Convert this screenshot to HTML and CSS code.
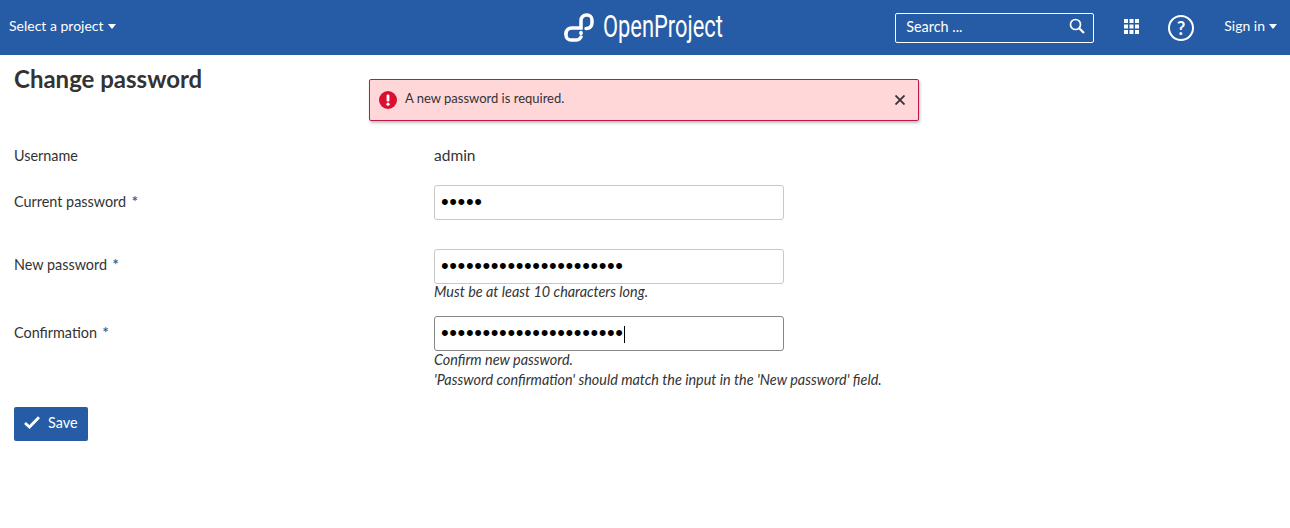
FILE: index.html

```html
<!DOCTYPE html>
<html lang="en">
<head>
    <meta charset="UTF-8">
    <title>Change password | OpenProject</title>
    <link rel="stylesheet" href="styles.css">
</head>
<body>
    <header class="topBar">
        <div class="topLeft">
            <a class="topLink">Select a project<span class="caret"></span></a>
        </div>
        <div class="logo">
            <svg class="logoMark" width="30" height="29" viewBox="0 0 30 29" fill="none" stroke="#fff" stroke-width="3.500" stroke-linecap="round">
                <path d="M2 20.500A5.500 5.500 0 0 1 7.500 15H17V7.500A5.500 5.500 0 0 1 22.500 2H23A5 5 0 0 1 28 7V10A5.500 5.500 0 0 1 22.500 15.500H22" />
                <path d="M2 20.500V22A5 5 0 0 0 7 27H11A6 6 0 0 0 17 24" />
                <path d="M17 19.500V20.500" />
            </svg>
            <span class="logoText">OpenProject</span>
        </div>
        <div class="topRight">
            <div class="searchBox">
                <span>Search ...</span>
                <svg width="16" height="16" viewBox="0 0 16 16" fill="none" stroke="#fff" stroke-width="1.700">
                    <circle cx="6.500" cy="6.500" r="5" />
                    <path d="M10.200 10.200L15 15" stroke-width="2.200" />
                </svg>
            </div>
            <svg class="gridIcon" width="15" height="15" viewBox="0 0 15 15" fill="#fff">
                <rect x="0" y="0" width="4" height="4" /><rect x="5.500" y="0" width="4" height="4" /><rect x="11" y="0" width="4" height="4" />
                <rect x="0" y="5.500" width="4" height="4" /><rect x="5.500" y="5.500" width="4" height="4" /><rect x="11" y="5.500" width="4" height="4" />
                <rect x="0" y="11" width="4" height="4" /><rect x="5.500" y="11" width="4" height="4" /><rect x="11" y="11" width="4" height="4" />
            </svg>
            <div class="helpIcon">?</div>
            <a class="topLink signIn">Sign in<span class="caret"></span></a>
        </div>
    </header>

    <div class="flash">
        <svg class="flashIcon" width="18" height="18" viewBox="0 0 18 18">
            <circle cx="9" cy="9" r="9" fill="#d9102f" />
            <rect x="7.600" y="3.500" width="2.800" height="7" rx="1.200" fill="#fff" />
            <circle cx="9" cy="13.200" r="1.600" fill="#fff" />
        </svg>
        <span class="flashText">A new password is required.</span>
        <svg class="flashClose" width="10" height="10" viewBox="0 0 10 10" stroke="#333" stroke-width="1.800">
            <path d="M0.500 0.500L9.500 9.500M9.500 0.500L0.500 9.500" />
        </svg>
    </div>

    <main class="content">
        <h2 class="pageTitle">Change password</h2>
        <form class="form">
            <div class="formLine lineUser">
                <label>Username</label>
                <div class="field">admin</div>
            </div>
            <div class="formLine lineCurrent">
                <label>Current password<span class="req">*</span></label>
                <div class="field">
                    <div class="input">&#8226;&#8226;&#8226;&#8226;&#8226;</div>
                </div>
            </div>
            <div class="formLine lineNew">
                <label>New password<span class="req">*</span></label>
                <div class="field">
                    <div class="input">&#8226;&#8226;&#8226;&#8226;&#8226;&#8226;&#8226;&#8226;&#8226;&#8226;&#8226;&#8226;&#8226;&#8226;&#8226;&#8226;&#8226;&#8226;&#8226;&#8226;&#8226;&#8226;</div>
                    <p class="hint">Must be at least 10 characters long.</p>
                </div>
            </div>
            <div class="formLine lineConfirm">
                <label>Confirmation<span class="req">*</span></label>
                <div class="field">
                    <div class="input focused">&#8226;&#8226;&#8226;&#8226;&#8226;&#8226;&#8226;&#8226;&#8226;&#8226;&#8226;&#8226;&#8226;&#8226;&#8226;&#8226;&#8226;&#8226;&#8226;&#8226;&#8226;&#8226;<span class="cursor"></span></div>
                    <p class="hint">Confirm new password.</p>
                    <p class="hint">'Password confirmation' should match the input in the 'New password' field.</p>
                </div>
            </div>
            <button type="button" class="buttonSave">
                <svg width="16" height="13" viewBox="0 0 16 13" fill="none" stroke="#fff" stroke-width="2.800">
                    <path d="M1 7L5.500 11L15 1.200" />
                </svg>
                Save
            </button>
        </form>
    </main>
</body>
</html>
```

FILE: styles.css

```css
* {
    margin: 0;
    padding: 0;
    box-sizing: border-box;
}

body {
    font-family: Lato, sans-serif;
    font-size: 14.400px;
    color: #333;
    background-color: #fff;
    position: relative;
}

.topBar {
    height: 55px;
    background-color: #265ca6;
    color: #fff;
    display: grid;
    grid-template-columns: 1fr auto 1fr;
    align-items: center;
    padding: 0 13px 0 9px;
}

.topLeft {
    margin-top: -4px;
}

.topLink {
    font-size: 14px;
    display: inline-flex;
    align-items: center;
}

.signIn {
    margin-top: -6px;
}

.caret {
    width: 0;
    height: 0;
    margin-left: 4px;
    margin-top: 2px;
    border-left: 4.500px solid transparent;
    border-right: 4.500px solid transparent;
    border-top: 5.500px solid #fff;
}

.logo {
    display: flex;
    align-items: center;
    width: 160px;
    margin-left: 1px;
    margin-bottom: 1px;
}

.logoMark {
    flex: none;
}

.logoText {
    font-family: Roboto, sans-serif;
    font-weight: 400;
    font-size: 31px;
    margin-left: 9px;
    margin-top: -2px;
    transform: scaleX(0.705);
    transform-origin: left center;
    white-space: nowrap;
}

.topRight {
    display: flex;
    align-items: center;
    justify-content: flex-end;
    margin-top: 1px;
}

.searchBox {
    width: 199px;
    height: 30px;
    border: 1px solid #fff;
    border-radius: 2px;
    display: flex;
    align-items: center;
    justify-content: space-between;
    padding: 0 8px 4px 10px;
    font-size: 14.400px;
}

.gridIcon {
    margin-left: 30px;
    margin-top: -3px;
}

.helpIcon {
    width: 26px;
    height: 26px;
    margin-left: 29px;
    margin-right: 30px;
    border: 2px solid #fff;
    border-radius: 50%;
    text-align: center;
    font-size: 18px;
    font-weight: 700;
    line-height: 22px;
}

.flash {
    position: absolute;
    top: 79px;
    left: 369px;
    width: 550px;
    height: 42px;
    background-color: #ffd7d9;
    border: 1px solid #c0174a;
    border-radius: 2px;
    box-shadow: 1px 2px 3px rgba(0, 0, 0, 0.25);
    display: flex;
    align-items: center;
    padding: 0 13px 0 9px;
    font-size: 13px;
}

.flashText {
    margin-left: 8px;
    margin-top: -5px;
    flex: 1;
}

.content {
    padding: 0 14px;
}

.pageTitle {
    font-size: 24px;
    font-weight: 700;
    line-height: 30px;
    padding-top: 9px;
}

.form {
    margin-top: 51px;
}

.formLine {
    display: flex;
}

.formLine label {
    width: 420px;
    line-height: 20px;
    padding-top: 6px;
    flex: none;
}

.lineUser {
    height: 40px;
}

.lineUser label {
    padding-top: 1px;
}

.lineUser .field {
    font-size: 15.500px;
    line-height: 20px;
}

.lineCurrent {
    height: 64px;
}

.lineCurrent label,
.lineConfirm label {
    padding-top: 7px;
}

.lineNew {
    height: 67px;
}

.lineConfirm {
    height: 91px;
}

.req {
    margin-left: 5.500px;
    color: #3f6598;
    font-weight: 700;
}

.input {
    width: 350px;
    height: 35px;
    border: 1px solid #c8c8c8;
    border-radius: 3px;
    padding-left: 6px;
    font-family: "Liberation Sans", sans-serif;
    font-size: 22px;
    letter-spacing: 0.600px;
    line-height: 31px;
    color: #000;
    background-color: #fff;
    white-space: nowrap;
}

.input.focused {
    border-color: #878787;
}

.cursor {
    display: inline-block;
    width: 1px;
    height: 17px;
    background-color: #000;
    vertical-align: -3px;
}

.hint {
    font-style: italic;
    line-height: 20px;
    position: relative;
}

.lineConfirm .hint {
    top: -1px;
}

.lineNew .hint {
    top: -2px;
}

.buttonSave {
    width: 74px;
    height: 34px;
    background-color: #265ca6;
    color: #fff;
    border: none;
    border-radius: 2px;
    font-family: Lato, sans-serif;
    font-size: 14.400px;
    display: flex;
    align-items: center;
    gap: 8px;
    padding: 0 0 3px 10px;
}
```
